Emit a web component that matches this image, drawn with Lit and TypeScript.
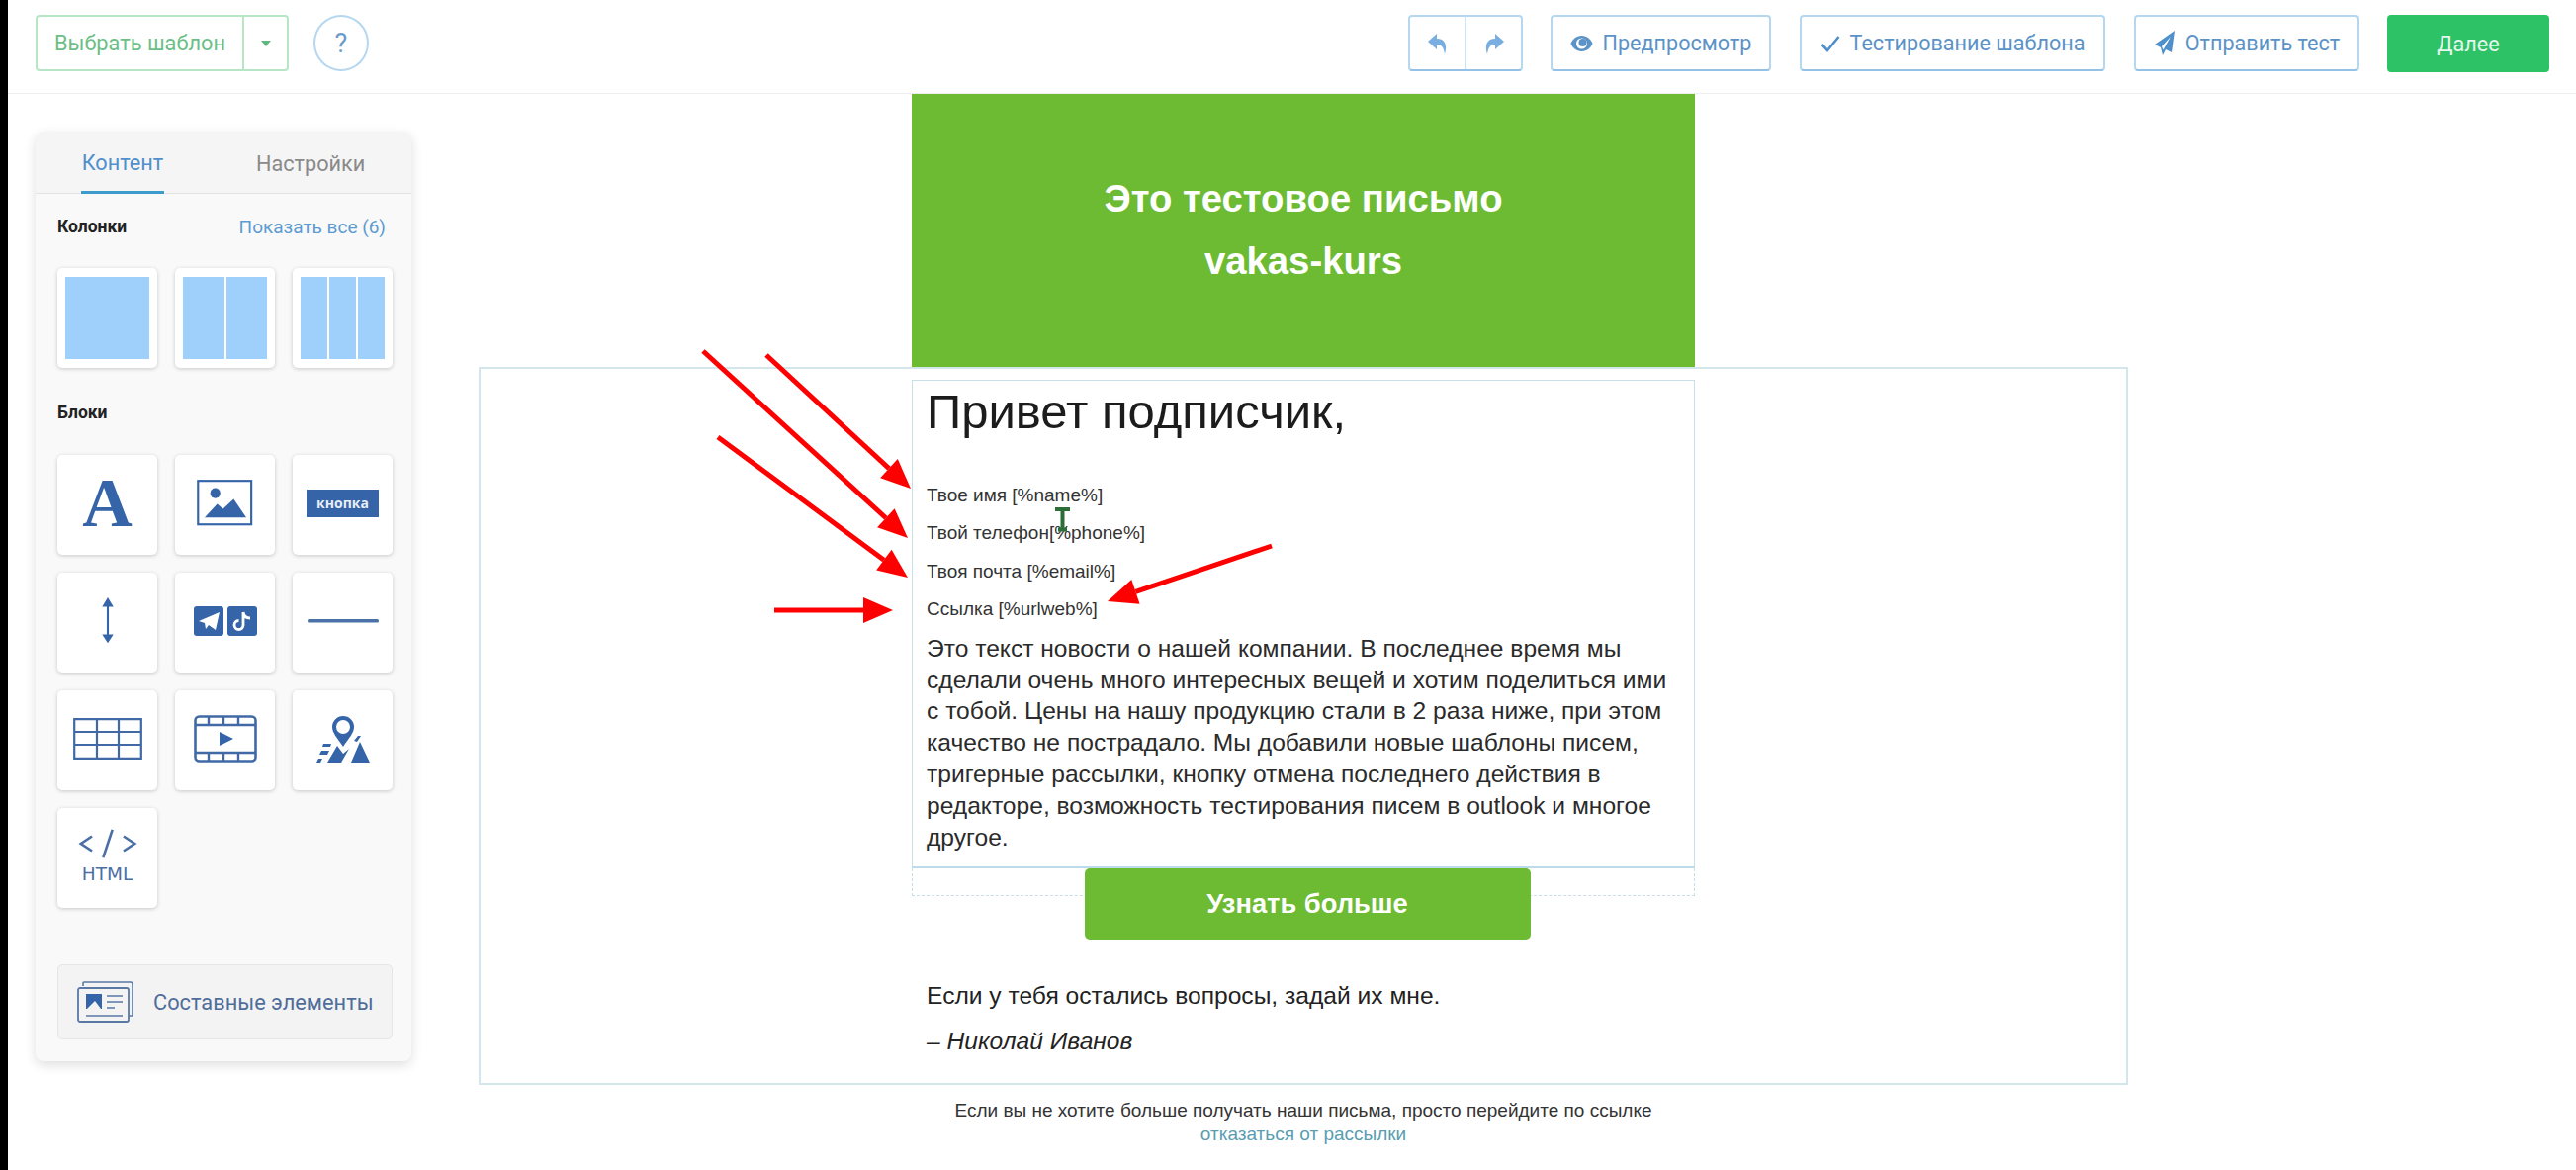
import { LitElement, html, css, svg } from "lit";
import { customElement } from "lit/decorators.js";

const ICON = "#3565a8";

const blockIcons = [
  html`<span class="bigA">A</span>`,
  html`<svg width="57" height="47" viewBox="0 0 58 48"><rect x="1.2" y="1.2" width="55" height="45" fill="none" stroke="${ICON}" stroke-width="2.2"/><circle cx="19" cy="14" r="5.2" fill="${ICON}"/><path d="M8 39 L21 25 L27 30 L38 20 L51 39 Z" fill="${ICON}"/></svg>`,
  html`<div class="kn">кнопка</div>`,
  html`<svg width="14" height="53" viewBox="0 0 16 54"><path d="M8 0 L14.5 11 H9.2 V43 H14.5 L8 53 L1.5 43 H6.8 V11 H1.5 Z" fill="${ICON}"/></svg>`,
  html`<svg width="64" height="30" viewBox="0 0 64 30"><rect width="30" height="30" rx="3" fill="${ICON}"/><path d="M5 15 L26 6 L22 24 L15 19 L12 23 L11 17 Z" fill="#fff"/><rect x="34" width="30" height="30" rx="3" fill="${ICON}"/><path d="M50 6 V19 A4.5 4.5 0 1 1 45.5 14.5 M50 6 C50.5 10 53 12 57 12" fill="none" stroke="#fff" stroke-width="2.8"/></svg>`,
  html`<svg width="72" height="6" viewBox="0 0 72 6"><rect y="1" width="72" height="3.4" rx="1.5" fill="#4a72a8"/></svg>`,
  html`<svg width="70" height="42" viewBox="0 0 70 42"><path d="M1.2 1.2 H68.8 V40.8 H1.2 Z M24 1.2 V40.8 M46 1.2 V40.8 M1.2 14 H68.8 M1.2 27 H68.8" fill="none" stroke="#4069a5" stroke-width="2.2"/></svg>`,
  html`<svg width="64" height="48" viewBox="0 0 64 48"><rect x="1.5" y="1.5" width="61" height="45" rx="4" fill="none" stroke="#4069a5" stroke-width="2.6"/><path d="M1.5 10 H62.5 M1.5 38 H62.5 M15 1.5 V10 M30 1.5 V10 M45 1.5 V10 M15 38 V46 M30 38 V46 M45 38 V46" fill="none" stroke="#4069a5" stroke-width="2.4"/><path d="M26 17 L40 24 L26 31 Z" fill="${ICON}"/></svg>`,
  html`<svg width="56" height="50" viewBox="0 0 56 50"><path d="M28 33 C22 24 17 19 17 13 A11 11 0 0 1 39 13 C39 19 34 24 28 33 Z M28 6 A7 7 0 1 0 28 20 A7 7 0 1 0 28 6 Z" fill="${ICON}" fill-rule="evenodd"/><path d="M12 49 L22 32 L28 40 L34 35 L26 49 Z M36 49 L45 28 L55 49 Z M1 49 L3 45 H7 L5 49 Z M4 41 L6 37 H14 L12 41 Z M8 30 H16 L15 33 H7 Z M39 27 L43 22 H46 L42 28 Z" fill="${ICON}"/></svg>`,
  html`<div class="htmlic"><svg width="60" height="30" viewBox="0 0 62 32"><path d="M14 8 L2 16 L14 24 M48 8 L60 16 L48 24 M36 1 L26 31" fill="none" stroke="#4a6fa5" stroke-width="2.8"/></svg><span>HTML</span></div>`,
];

const arrows: [number, number, number, number][] = [
  [775, 359, 921, 494],
  [711, 355, 918, 544],
  [726, 442, 918, 584],
  [783, 617, 903, 617],
  [1286, 552, 1120, 608],
];

function arrow([x1, y1, x2, y2]: [number, number, number, number]) {
  const a = Math.atan2(y2 - y1, x2 - x1);
  const len = 30;
  const half = 13;
  const bx = x2 - Math.cos(a) * len;
  const by = y2 - Math.sin(a) * len;
  const nx = -Math.sin(a) * half;
  const ny = Math.cos(a) * half;
  return svg`<line x1="${x1}" y1="${y1}" x2="${bx}" y2="${by}" stroke="#f00" stroke-width="5"/>
    <polygon points="${x2},${y2} ${bx + nx},${by + ny} ${bx - nx},${by - ny}" fill="#f00"/>`;
}

@customElement("app-root")
export class AppRoot extends LitElement {
  static styles = css`
    :host { display: block; position: relative; width: 2605px; height: 1183px; overflow: hidden; background: #fff; font-family: Roboto, "Liberation Sans", sans-serif; }
    .root { display: flex; height: 1183px; }
    .stripe { width: 8px; flex: none; background: #000; }
    .content { flex: 1; min-width: 0; display: flex; flex-direction: column; }
    .top { height: 95px; flex: none; box-sizing: border-box; border-bottom: 1px solid #eeeeee; display: flex; align-items: flex-start; padding: 15px 27px 0 28px; }
    .btn { box-sizing: border-box; height: 57px; display: flex; align-items: center; justify-content: center; gap: 10px; border: 2px solid #b5d7ef; border-bottom-color: #94c2e6; border-radius: 4px; color: #5b93c7; font-size: 21.6px; background: #fff; white-space: nowrap; }
    .tpl { display: flex; width: 256px; height: 57px; box-sizing: border-box; border: 2px solid #b7e6c6; border-radius: 4px; color: #6cbf86; font-size: 21.8px; align-items: stretch; white-space: nowrap; }
    .tpl .nm { width: 207px; display: flex; align-items: center; justify-content: center; border-right: 2px solid #b7e6c6; }
    .tpl .cr { flex: 1; display: flex; align-items: center; justify-content: center; }
    .caret { width: 0; height: 0; border: 5px solid transparent; border-top: 6px solid #5fb87f; border-bottom: 0; }
    .help { box-sizing: border-box; width: 56px; height: 57px; border: 2px solid #b5d7ef; border-radius: 50%; margin-left: 25px; display: flex; align-items: center; justify-content: center; color: #6a9bc9; font-size: 27px; }
    .spacer { flex: 1; }
    .undo { width: 116px; margin-right: 28px; gap: 0; padding: 0; align-items: stretch; }
    .undo span { flex: 1; display: flex; align-items: center; justify-content: center; }
    .undo span + span { border-left: 2px solid #cfe4f3; }
    .pre { width: 223px; margin-right: 29px; }
    .test { width: 309px; margin-right: 29px; }
    .send { width: 228px; margin-right: 28px; }
    .next { width: 164px; height: 58px; box-sizing: border-box; background: #2ec267; color: #e6f7ec; border-radius: 4px; font-size: 21.6px; display: flex; align-items: center; justify-content: center; }
    .main { flex: 1; min-height: 0; display: flex; align-items: flex-start; padding-left: 28px; }
    .panel { width: 380px; height: 940px; margin-top: 38px; flex: none; box-sizing: border-box; background: #f9f9f9; border-radius: 8px; box-shadow: 0 4px 12px rgba(0,0,0,.13); display: flex; flex-direction: column; }
    .tabs { height: 63px; flex: none; box-sizing: border-box; border-bottom: 1px solid #e4e4e4; display: flex; background: #f5f5f5; border-radius: 8px 8px 0 0; font-size: 21.7px; color: #8a8a8a; padding-left: 46px; }
    .tab { box-sizing: border-box; height: 63px; display: flex; align-items: center; }
    .tab.on { color: #4f8fcb; border-bottom: 3px solid #3d9ccb; width: 84px; justify-content: center; margin-right: 93px; white-space: nowrap; padding-top: 3px; }
    .tab.off { padding-top: 1px; white-space: nowrap; }
    .body { flex: 1; display: flex; flex-direction: column; padding: 0 18px 22px 22px; }
    .h { display: flex; justify-content: space-between; align-items: center; height: 22px; margin-top: 22px; font-weight: 700; font-size: 17.5px; color: #222; padding-right: 8px; }
    .h a { font-weight: 400; font-size: 19px; color: #5c9bd1; }
    .grid { display: grid; grid-template-columns: repeat(3, 101px); column-gap: 18px; row-gap: 18px; }
    .cols { margin-top: 31px; }
    .card { box-sizing: border-box; width: 101px; height: 101px; background: #fff; border-radius: 5px; box-shadow: 0 1px 4px rgba(0,0,0,.2); display: flex; align-items: center; justify-content: center; }
    .cols .card { align-items: stretch; padding: 9px 8px; gap: 2px; }
    .cols .card i { flex: 1; background: #9fd0fb; }
    .blocks { margin-top: 32px; }
    .blocks .card { padding-bottom: 4px; }
    .h2 { margin-top: 34px; }
    .bigA { font-family: "Liberation Serif", serif; font-weight: 700; font-size: 70px; line-height: 60px; color: #3565a8; }
    .kn { width: 73px; height: 28px; background: #3565a8; color: #e8eef7; font-family: "Open Sans", sans-serif; font-weight: 700; font-size: 14px; display: flex; align-items: center; justify-content: center; }
    .htmlic { display: flex; flex-direction: column; align-items: center; gap: 6px; color: #4a6fa5; font-family: "DejaVu Sans", sans-serif; font-size: 18.5px; line-height: 20px; }
    .comp { margin-top: auto; height: 76px; box-sizing: border-box; border: 1px solid #e6e6e6; border-radius: 5px; background: #f3f3f4; display: flex; align-items: center; padding-left: 19px; gap: 19px; color: #4f6d99; font-size: 21.8px; width: 339px; white-space: nowrap; }
    .stage { margin-left: 68px; width: 1668px; flex: none; display: flex; flex-direction: column; align-items: center; font-family: "Liberation Sans", Arial, sans-serif; }
    .hero { width: 792px; height: 276px; box-sizing: border-box; background: #6cbb33; color: #fff; font-weight: 700; font-size: 38.3px; line-height: 63px; text-align: center; padding-top: 74px; }
    .frame { width: 1668px; height: 726px; box-sizing: border-box; border: 2px solid #d3e6ec; padding-top: 11px; display: flex; flex-direction: column; align-items: center; }
    .edit { width: 792px; height: 494px; box-sizing: border-box; border: 1px solid #c9dfe8; border-bottom: 2px solid #bcdcec; padding: 2px 14px 0; color: #222; }
    .edit h1 { margin: 0; font-weight: 400; font-size: 49px; line-height: 58px; color: #1c1c1c; }
    .small { font-size: 19px; line-height: 38.4px; color: #333; }
    .fields { margin-top: 37px; }
    .edit p { margin: 4px 0 0; font-size: 24.6px; line-height: 31.9px; width: 762px; color: #2a2a2a; }
    .dash { width: 792px; height: 28px; flex: none; box-sizing: border-box; border: 1px dashed #c9dfe8; border-top: 0; display: flex; justify-content: center; align-items: flex-start; }
    .cta { width: 451px; height: 72px; flex: none; margin-left: 8px; background: #6cbb33; color: #fff; font-weight: 700; font-size: 27.3px; border-radius: 5px; display: flex; align-items: center; justify-content: center; }
    .tail { width: 762px; margin-top: 87px; font-size: 24.6px; color: #222; }
    .tail div + div { margin-top: 18px; font-style: italic; }
    .tail div { line-height: 28px; }
    .foot { margin-top: 14px; text-align: center; font-size: 19px; line-height: 24px; color: #333; }
    .foot a { display: block; color: #5a9db0; }
    .marks { position: absolute; left: 0; top: 0; pointer-events: none; }
  `;

  render() {
    return html`
      <div class="root">
        <div class="stripe"></div>
        <div class="content">
          <div class="top">
            <div class="tpl"><div class="nm">Выбрать шаблон</div><div class="cr"><div class="caret"></div></div></div>
            <div class="help">?</div>
            <div class="spacer"></div>
            <div class="btn undo">
              <span><svg width="22" height="24" viewBox="0 0 22 24"><path d="M10 2 L1 10 L10 18 V13 C15 13 17 16 18 23 C21 13 18 7 10 7 Z" fill="#78aee0"/></svg></span>
              <span><svg width="22" height="24" viewBox="0 0 22 24"><path d="M12 2 L21 10 L12 18 V13 C7 13 5 16 4 23 C1 13 4 7 12 7 Z" fill="#78aee0"/></svg></span>
            </div>
            <div class="btn pre"><svg width="23" height="18" viewBox="0 0 23 18"><path d="M11.5 1 C17 1 21 5 22.5 9 C21 13 17 17 11.5 17 C6 17 2 13 .5 9 C2 5 6 1 11.5 1 Z" fill="#5b93c7"/><circle cx="11.5" cy="9" r="5.5" fill="#fff"/><circle cx="12.5" cy="8" r="4" fill="#5b93c7"/></svg>Предпросмотр</div>
            <div class="btn test"><svg width="20" height="18" viewBox="0 0 20 18"><path d="M1.5 10 L7 16 L18.5 2" fill="none" stroke="#4f8fcb" stroke-width="2.6"/></svg>Тестирование шаблона</div>
            <div class="btn send"><svg width="22" height="28" viewBox="0 0 22 28"><path d="M21 1 L1 15 L7 18 L9 26 L12 20 L18 23 Z M17 7 L8 17 L9.5 20.5 Z" fill="#4f8fcb" fill-rule="evenodd"/></svg>Отправить тест</div>
            <div class="next">Далее</div>
          </div>
          <div class="main">
            <div class="panel">
              <div class="tabs"><div class="tab on">Контент</div><div class="tab off">Настройки</div></div>
              <div class="body">
                <div class="h"><span>Колонки</span><a>Показать все (6)</a></div>
                <div class="grid cols">
                  ${[1, 2, 3].map(n => html`<div class="card">${Array.from({ length: n }, () => html`<i></i>`)}</div>`)}
                </div>
                <div class="h h2"><span>Блоки</span></div>
                <div class="grid blocks">
                  ${blockIcons.map(i => html`<div class="card">${i}</div>`)}
                </div>
                <div class="comp">
                  <svg width="58" height="42" viewBox="0 0 58 42"><path d="M6 5 V2 Q6 1 7 1 H54 Q56 1 56 3 V35 H52" fill="none" stroke="#5a78a5" stroke-width="1.6"/><rect x="1" y="7" width="51" height="34" rx="2" fill="#f3f3f4" stroke="#5a78a5" stroke-width="1.8"/><rect x="9" y="13" width="16" height="15" fill="#3565a8"/><path d="M10 28 L18 20 L24 28 Z" fill="#f3f3f4"/><path d="M30 15 H46 M30 21 H46 M30 27 H38 M9 35 H46" stroke="#5a78a5" stroke-width="1.6"/></svg>
                  <span>Составные элементы</span>
                </div>
              </div>
            </div>
            <div class="stage">
              <div class="hero">Это тестовое письмо<br />vakas-kurs</div>
              <div class="frame">
                <div class="edit">
                  <h1>Привет подписчик,</h1>
                  <div class="small fields">
                    <div>Твое имя [%name%]</div>
                    <div>Твой телефон[%phone%]</div>
                    <div>Твоя почта [%email%]</div>
                    <div>Ссылка [%urlweb%]</div>
                  </div>
                  <p>Это текст новости о нашей компании. В последнее время мы сделали очень много интересных вещей и хотим поделиться ими с тобой. Цены на нашу продукцию стали в 2 раза ниже, при этом качество не пострадало. Мы добавили новые шаблоны писем, тригерные рассылки, кнопку отмена последнего действия в редакторе, возможность тестирования писем в outlook и многое другое.</p>
                </div>
                <div class="dash"><div class="cta">Узнать больше</div></div>
                <div class="tail"><div>Если у тебя остались вопросы, задай их мне.</div><div>– Николай Иванов</div></div>
              </div>
              <div class="foot">Если вы не хотите больше получать наши письма, просто перейдите по ссылке<a>отказаться от рассылки</a></div>
            </div>
          </div>
        </div>
      </div>
      <svg class="marks" width="2605" height="1183" viewBox="0 0 2605 1183">
        ${arrows.map(arrow)}
        <path d="M1067 515 H1082 M1074.5 515 V535 M1070 535.5 H1079" fill="none" stroke="#2c6e38" stroke-width="4"/>
      </svg>
    `;
  }
}
